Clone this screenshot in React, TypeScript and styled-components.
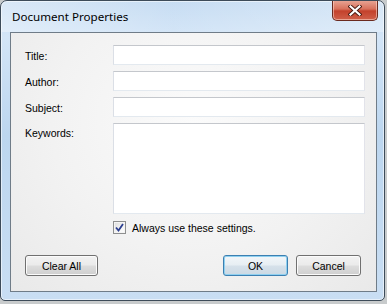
import styled, { createGlobalStyle } from "styled-components";

const GlobalStyle = createGlobalStyle`
  html, body {
    margin: 0;
    padding: 0;
    background: #c8cbcc;
  }
  * {
    box-sizing: border-box;
  }
`;

const Page = styled.div`
  width: 387px;
  height: 304px;
  overflow: hidden;
`;

const Window = styled.div`
  width: 385px;
  height: 301px;
  display: flex;
  flex-direction: column;
  border: 1px solid #3d4b59;
  border-radius: 7px 7px 5px 5px;
  background: linear-gradient(180deg, #c4dbf2 0%, #d3e5f7 12%, #bcd6ef 45%, #c9def3 100%);
  box-shadow: inset 0 0 0 1px rgba(255, 255, 255, 0.55);
  overflow: hidden;
`;

const TitleBar = styled.div`
  height: 31px;
  flex-shrink: 0;
  display: flex;
  align-items: flex-start;
  justify-content: space-between;
  padding: 0 6px 0 11px;
  background: linear-gradient(90deg, rgba(255, 255, 255, 0.35) 0%, rgba(255, 255, 255, 0.05) 45%, rgba(255, 255, 255, 0.3) 100%);
`;

const Title = styled.span`
  margin-top: 8px;
  font-family: "Noto Sans", "Open Sans", sans-serif;
  font-size: 11.6px;
  line-height: 16px;
  color: #000;
`;

const CloseButton = styled.div`
  width: 46px;
  height: 21px;
  margin-top: -1px;
  display: flex;
  align-items: center;
  justify-content: center;
  border: 1px solid #6a2a1f;
  border-top: none;
  border-radius: 0 0 5px 5px;
  background: linear-gradient(180deg, #e9a898 0%, #d8715c 45%, #c3412c 55%, #d0604a 100%);
  box-shadow: inset 0 0 0 1px rgba(255, 220, 210, 0.55);
`;

const Client = styled.div`
  flex: 1;
  margin: 0 7px 8px 9px;
  display: flex;
  flex-direction: column;
  border: 1px solid #6f7c88;
  background: radial-gradient(ellipse at 50% 35%, #fbfbfb 0%, #f2f2f2 55%, #e9e9e9 100%);
  font-family: "Liberation Sans", Arial, sans-serif;
  font-size: 10.5px;
  color: #000;
`;

const Form = styled.div`
  display: grid;
  grid-template-columns: 88px 252px;
  row-gap: 6px;
  padding: 12px 11px 0 14px;
`;

const Label = styled.label<{ $top?: boolean }>`
  display: flex;
  align-items: ${({ $top }) => ($top ? "flex-start" : "center")};
  padding-top: ${({ $top }) => ($top ? "4px" : "1px")};
`;

const TextBox = styled.input`
  height: 20px;
  width: 100%;
  margin: 0;
  padding: 0 3px;
  border: 1px solid;
  border-color: #c4c7cc #e2e3ea #e3e9ef #dbdfe6;
  background: #fff;
  outline: none;
  font: inherit;
`;

const TextArea = styled.textarea`
  height: 91px;
  width: 100%;
  margin: 0;
  padding: 2px 3px;
  border: 1px solid;
  border-color: #c4c7cc #e2e3ea #e3e9ef #dbdfe6;
  background: #fff;
  resize: none;
  outline: none;
  font: inherit;
`;

const CheckRow = styled.div`
  grid-column: 2;
  display: flex;
  align-items: center;
  gap: 6px;
  margin-top: 1px;
  height: 13px;
`;

const CheckBox = styled.span`
  width: 13px;
  height: 13px;
  flex-shrink: 0;
  display: flex;
  align-items: center;
  justify-content: center;
  border: 1px solid #8e8f8f;
  background: linear-gradient(135deg, #dcdcdc 0%, #f4f4f4 60%, #ffffff 100%);
  box-shadow: inset 0 0 0 1px #f4f4f4;
`;

const ButtonBar = styled.div`
  margin-top: auto;
  display: flex;
  justify-content: space-between;
  padding: 0 15px 15px 14px;
`;

const ButtonGroup = styled.div`
  display: flex;
  gap: 8px;
`;

const Button = styled.button<{ $width: number; $default?: boolean }>`
  width: ${({ $width }) => $width}px;
  height: 21px;
  margin: 0;
  padding: 0;
  border: 1px solid ${({ $default }) => ($default ? "#3c7fb1" : "#707070")};
  border-radius: 3px;
  background: ${({ $default }) =>
    $default
      ? "linear-gradient(180deg, #f2f6f9 0%, #e7eef3 48%, #d6e1ea 52%, #cbd9e4 100%)"
      : "linear-gradient(180deg, #f2f2f2 0%, #ebebeb 48%, #dddddd 52%, #cfcfcf 100%)"};
  box-shadow: inset 0 0 0 1px ${({ $default }) => ($default ? "#8fd0f0" : "#fbfbfb")};
  font-family: "Liberation Sans", Arial, sans-serif;
  font-size: 10.5px;
  color: #000;
`;

export default function App() {
  return (
    <>
      <GlobalStyle />
      <Page>
        <Window>
          <TitleBar>
            <Title>Document Properties</Title>
            <CloseButton>
              <svg width="14" height="11" viewBox="0 0 14 11">
                <path d="M2.5 1.5 L11.5 9.5 M11.5 1.5 L2.5 9.5" stroke="#4a1a12" strokeWidth="4" strokeLinecap="square" />
                <path d="M2.5 1.5 L11.5 9.5 M11.5 1.5 L2.5 9.5" stroke="#ffffff" strokeWidth="2.2" strokeLinecap="square" />
              </svg>
            </CloseButton>
          </TitleBar>

          <Client>
            <Form>
              <Label>Title:</Label>
              <TextBox />
              <Label>Author:</Label>
              <TextBox />
              <Label>Subject:</Label>
              <TextBox />
              <Label $top>Keywords:</Label>
              <TextArea />
              <CheckRow>
                <CheckBox>
                  <svg width="9" height="9" viewBox="0 0 9 9">
                    <path d="M1 4.5 L3.5 7.5 L8 1" fill="none" stroke="#2c3f8f" strokeWidth="1.8" />
                  </svg>
                </CheckBox>
                <span>Always use these settings.</span>
              </CheckRow>
            </Form>

            <ButtonBar>
              <Button $width={73}>Clear All</Button>
              <ButtonGroup>
                <Button $width={65} $default>
                  OK
                </Button>
                <Button $width={65}>Cancel</Button>
              </ButtonGroup>
            </ButtonBar>
          </Client>
        </Window>
      </Page>
    </>
  );
}
